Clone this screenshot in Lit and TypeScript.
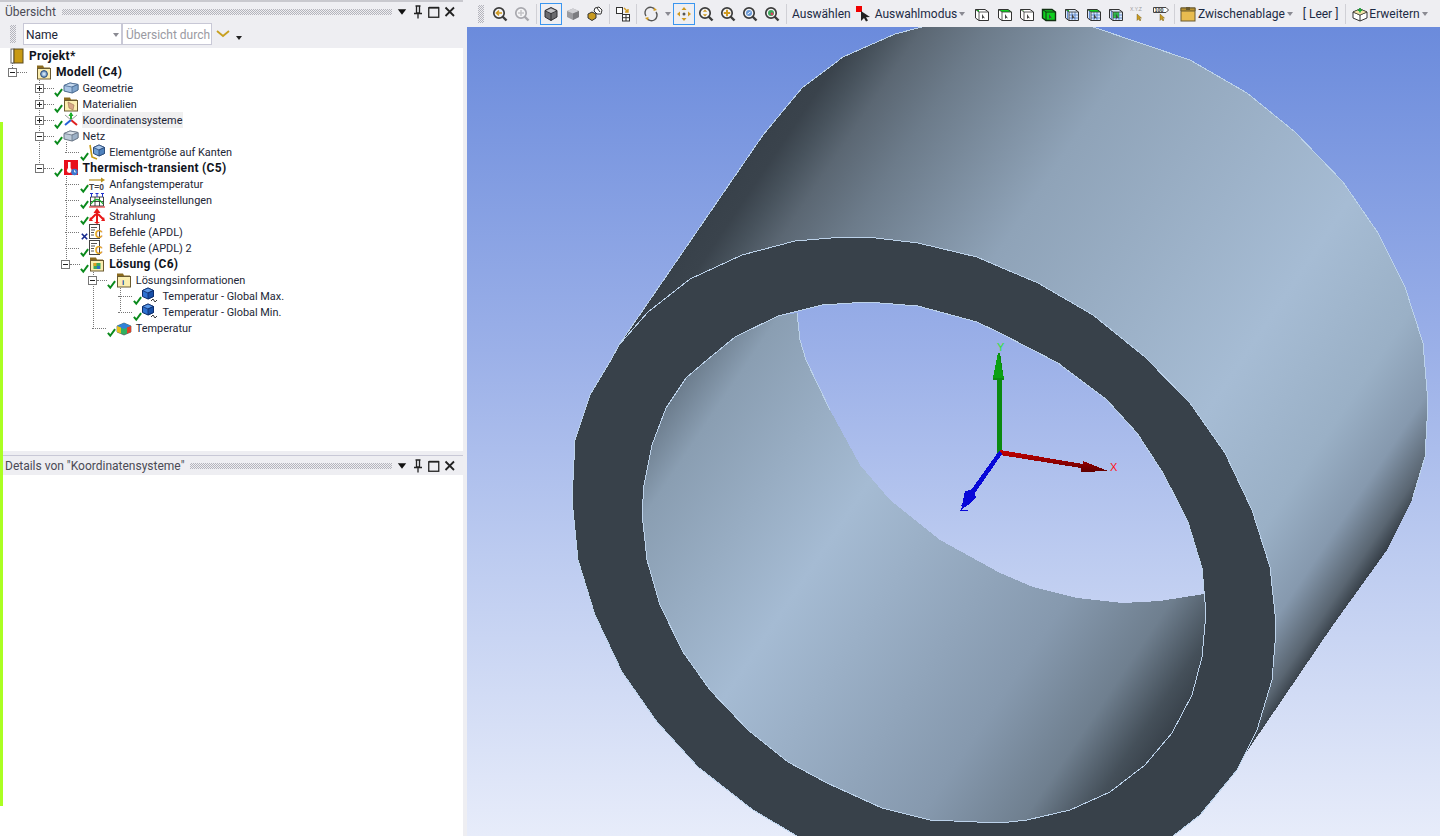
import { LitElement, html, css, svg } from "lit";
import { customElement } from "lit/decorators.js";

type Row = {
  label: string;
  depth: number;
  icon: string;
  exp?: "+" | "-";
  state?: "ok" | "x";
  bold?: boolean;
  hover?: boolean;
};

const ROWS: Row[] = [
  { label: "Modell (C4)", depth: 0, icon: "model", exp: "-", bold: true },
  { label: "Geometrie", depth: 1, icon: "geom", exp: "+", state: "ok" },
  { label: "Materialien", depth: 1, icon: "mat", exp: "+", state: "ok" },
  { label: "Koordinatensysteme", depth: 1, icon: "axes", exp: "+", state: "ok", hover: true },
  { label: "Netz", depth: 1, icon: "mesh", exp: "-", state: "ok" },
  { label: "Elementgröße auf Kanten", depth: 2, icon: "edge", state: "ok" },
  { label: "Thermisch-transient (C5)", depth: 1, icon: "therm", exp: "-", state: "ok", bold: true },
  { label: "Anfangstemperatur", depth: 2, icon: "t0", state: "ok" },
  { label: "Analyseeinstellungen", depth: 2, icon: "analysis", state: "ok" },
  { label: "Strahlung", depth: 2, icon: "rad", state: "ok" },
  { label: "Befehle (APDL)", depth: 2, icon: "cmd", state: "x" },
  { label: "Befehle (APDL) 2", depth: 2, icon: "cmd", state: "ok" },
  { label: "Lösung (C6)", depth: 2, icon: "sol", exp: "-", state: "ok", bold: true },
  { label: "Lösungsinformationen", depth: 3, icon: "info", exp: "-", state: "ok" },
  { label: "Temperatur - Global Max.", depth: 4, icon: "probe", state: "ok" },
  { label: "Temperatur - Global Min.", depth: 4, icon: "probe", state: "ok" },
  { label: "Temperatur", depth: 3, icon: "rainbow", state: "ok" },
];

const cube = (top: string, left: string, right: string, line = "#4a6a90") => svg`
  <path d="M1 5.5 L7 3 L15 4.5 L15 10 L9 13 L1 11Z" fill="${left}" stroke="${line}" stroke-width="1"/>
  <path d="M1 5.5 L7 3 L15 4.5 L9 7Z" fill="${top}" stroke="${line}" stroke-width=".8"/>
  <path d="M9 7 L15 4.5 L15 10 L9 13Z" fill="${right}" stroke="${line}" stroke-width=".8"/>`;

// upright cube, used by the probe and sizing icons
const isoCube = (top: string, left: string, right: string, line: string) => svg`
  <path d="M6 1 L11.5 3.5 V9.5 L6 12 L0.5 9.5 V3.5Z" fill="${left}" stroke="${line}"/>
  <path d="M6 1 L11.5 3.5 L6 6 L0.5 3.5Z" fill="${top}" stroke="${line}" stroke-width=".8"/>
  <path d="M6 6 L11.5 3.5 V9.5 L6 12Z" fill="${right}" stroke="${line}" stroke-width=".8"/>`;

const folder = (inner: unknown) => svg`
  <path d="M1 1.5 H7 L8 3.5 H14 V5 H1Z" fill="#8a6a1e"/>
  <rect x="1.5" y="4.5" width="13" height="10.5" fill="#fbeeb0" stroke="#6a5a30"/>
  ${inner}`;

const ICONS: Record<string, unknown> = {
  book: svg`<rect x="1" y="1" width="3" height="14" fill="#fff" stroke="#666"/><rect x="4" y="1" width="9" height="14" fill="#c89a14" stroke="#5a4a20"/>`,
  model: folder(svg`<circle cx="8" cy="10" r="3.4" fill="#7aa6cc" stroke="#2c4a78"/><rect x="6.5" y="8.5" width="3" height="3" fill="#cfe0ef"/>`),
  geom: cube("#c4d8ee", "#a8c4e4", "#7fa4cc"),
  mat: folder(svg`<path d="M5 6 L11 9 L10 14 L6 12Z" fill="#d8a888" stroke="#9a7050" stroke-width=".6"/>`),
  axes: svg`<path d="M8 8 V1" stroke="#1fae2c" stroke-width="2"/><path d="M8 0 L5.5 4 H10.5Z" fill="#1fae2c"/><path d="M8 8 L14 13" stroke="#e02020" stroke-width="2"/><path d="M8 8 L2 13" stroke="#2460d8" stroke-width="2"/><path d="M8 8 L2 3 M8 8 L14 3" stroke="#9a9a9a" stroke-width="1"/>`,
  mesh: cube("#dbe2ea", "#bccad9", "#9cb0c6", "#6a7686"),
  edge: svg`<path d="M1 1 L3 13 L8 15" fill="none" stroke="#c89a14" stroke-width="1.6"/><g transform="translate(4 0)">${isoCube("#a9c8ec", "#6f9fd4", "#4f82bc", "#2c4a78")}</g>`,
  therm: svg`<rect x="1" y="0" width="14" height="15" fill="#e8101c"/><rect x="5" y="2" width="2.6" height="8" fill="#fff"/><circle cx="6.3" cy="10.5" r="2.4" fill="#fff"/><circle cx="11.5" cy="12" r="3.3" fill="#3a78d0"/><path d="M11.5 10.2V12H13" stroke="#fff" stroke-width=".8" fill="none"/>`,
  t0: svg`<path d="M0 4 H13" stroke="#b8901c" stroke-width="1.2"/><path d="M12 1.5 L16 4 L12 6.5Z" fill="#b8901c"/><text x="0" y="14" font-family="Liberation Sans" font-size="8.5" font-weight="700" fill="#444">T=0</text>`,
  analysis: svg`<path d="M1.5 5 H14.5 M1.5 14 H14.5 M1.5 5 V14 M6 5 V14 M10.5 5 V14 M14.5 5 V14 M1.5 9.5 H14.5" stroke="#333" stroke-width=".9" fill="none"/><path d="M2 12 Q8 3 14 12" stroke="#1cb02c" stroke-width="1.3" fill="none"/><path d="M1 1.5 H4 M2.5 1.5 V5 M6.5 1.5 H9.5 M8 1.5 V5 M12 1.5 H15 M13.5 1.5 V5" stroke="#2233cc" stroke-width="1"/><path d="M0 15 H16" stroke="#e01818" stroke-width="1"/>`,
  rad: svg`<path d="M8 2 V15" stroke="#e81818" stroke-width="2"/><path d="M8 0 L4.5 5 H11.5Z" fill="#e81818"/><path d="M7 6 L2 11 M9 6 L14 11" stroke="#e81818" stroke-width="2"/><path d="M0 13 L4 13 L1 9Z M16 13 L12 13 L15 9Z M5 14 L11 14 L8 16Z" fill="#e81818"/>`,
  cmd: svg`<rect x="0.5" y="0.5" width="10" height="14" fill="#fff" stroke="#444"/><path d="M2 3.5H8M2 6H6M2 8.5H5M2 11H5" stroke="#555"/><text x="6" y="14" font-family="Liberation Sans" font-size="11" font-weight="700" fill="#e0a020">C</text>`,
  sol: folder(svg`<rect x="4.5" y="7" width="7" height="6" fill="#38a860"/><rect x="4.5" y="7" width="3" height="3" fill="#e0a020"/><rect x="8" y="10" width="3" height="3" fill="#2870c8"/>`),
  info: folder(svg`<text x="6" y="13" font-family="Liberation Sans" font-size="8" font-weight="700" fill="#1848a8">i</text>`),
  probe: svg`<g transform="translate(0 -1)">${isoCube("#5a98e8", "#2c70d0", "#1850a8", "#0c2c68")}</g><path d="M9 13 L11 11 L13 14 L15 12" stroke="#222" fill="none" stroke-width=".9"/>`,
  rainbow: svg`<path d="M1 6 L8 3 L15 6 L15 12 L8 15 L1 12Z" fill="#30b060" stroke="#444" stroke-width=".6"/><path d="M1 6 L8 3 L15 6 L8 9Z" fill="#3080d8"/><path d="M1 6 L5 7.5 L5 13.5 L1 12Z" fill="#e8c020"/><path d="M11 7.5 L15 6 L15 12 L11 13.5Z" fill="#e04028"/>`,
};

const check = svg`<svg class="state" width="9" height="9" viewBox="0 0 10 10"><path d="M1 5.5 L3.6 8.6 L9 1.2" fill="none" stroke="#0a8a1c" stroke-width="2.2"/></svg>`;
const cross = svg`<svg class="state" width="9" height="9" viewBox="0 0 10 10"><path d="M2 2 L8 8 M8 2 L2 8" stroke="#14288c" stroke-width="1.8"/></svg>`;

const mag = (inner: unknown, c = "#3c3c3c") => html`<svg width="16" height="16" viewBox="0 0 16 16"><path d="M10.5 10.5 L14.5 14.5" stroke="${c}" stroke-width="2.4"/><circle cx="7" cy="7" r="5.2" fill="#f4f4f6" stroke="${c}" stroke-width="1.7"/>${inner}</svg>`;
const ic = (inner: unknown) => html`<svg width="16" height="16" viewBox="0 0 16 16">${inner}</svg>`;

const ptr = svg`<path d="M8 8 L8 13 L9.3 11.8 L11 12.6Z" fill="#444"/>`;
const boxEdges = svg`<path d="M1.5 3.5 H11 L14.5 6 V14.5 H5 L1.5 12Z" fill="none" stroke="#333"/><path d="M5 6 V14.5 M5 6 H14.5 M5 6 L1.5 3.5" stroke="#333" stroke-width=".8" fill="none"/>`;
const selCube = (face: unknown) => ic(svg`<path d="M1.5 3.5 H11 L14.5 6 V14.5 H5 L1.5 12Z" fill="#fff"/>${face}${boxEdges}${ptr}`);
const gridCube = (face: unknown) => ic(svg`<path d="M1.5 3.5 H11 L14.5 6 V14.5 H5 L1.5 12Z" fill="#dbe8f8"/><path d="M8 6V14.5 M11 6V14.5 M5 9H14.5 M5 12H14.5 M3.5 5V13" stroke="#4a78c8" stroke-width=".8"/>${face}${boxEdges}${ptr}`);

const BODY_EDGE = "611,360 619,345 763,135 802,88 843,57 895,34 922,27 960,20 1000,15 1050,18 1093,27 1190,60 1247,93 1295,132 1343,182 1378,233 1405,287 1423,343 1428,403 1425,457 1412,500";
const OUTER_BODY = `${BODY_EDGE} 1387,550 1333,625 1233,772 900,600`;
const RING = "611,360 619,345 648,312 690,279 742,255 795,241 843,237 867,237 918,243 977,257 1000,267 1038,283 1093,315 1145,357 1190,403 1225,453 1252,510 1270,567 1276,623 1275,643 1272,680 1257,730 1237,770 1200,815 1173,836 1120,870 1000,890 900,875 797,836 753,810 698,767 657,722 622,672 595,615 578,560 572,500 575,440 590,395";
const HOLE_RIGHT = "1206,613 1202,657 1192,695 1172,733 1145,765 1110,792 1070,810 1027,820 1000,823 930,820 882,808 827,783 788,762 748,730 710,690 683,652 660,605 647,560 642,513 644,485 652,445 666,408 686,378 707,360 735,337 778,316";
const HOLE = `${HOLE_RIGHT} 822,305 867,302 918,306 977,322 1000,333 1058,363 1107,400 1137,433 1163,473 1182,510 1188,522 1202,568`;
const INNER = `${HOLE_RIGHT} 797,313 800,340 806,360 830,410 860,465 890,500 940,540 1000,573 1033,587 1077,598 1123,603 1160,601 1204,594`;

@customElement("app-root")
export class AppRoot extends LitElement {
  static styles = css`
    :host {
      display: block;
      width: 1440px;
      height: 836px;
      overflow: hidden;
      position: relative;
      background: #eeeef2;
      font-family: Roboto, "Noto Sans", sans-serif;
      font-size: 12px;
      color: #1c2636;
    }
    .page { display: flex; height: 836px; }
    .left { width: 463px; display: flex; flex-direction: column; flex: none; }
    .lime { position: absolute; left: 0; top: 122px; width: 3px; height: 684px; background: #aaff22; }
    .gap { flex: none; width: 4px; }
    .right { flex: 1; display: flex; flex-direction: column; min-width: 0; }

    .title {
      display: flex; align-items: center; flex: none; height: 20px;
      padding-left: 5px; background: #eeeef2; color: #4a4a55;
    }
    .title.top { border-top: 2px solid #c8c8ce; height: 17px; padding-top: 1px; }
    .title.sub { border-top: 1px solid #c8c8d6; height: 19px; margin-left: 2px; padding-left: 3px; margin-top: 4px; }
    .dots {
      flex: 1; height: 6px; margin: 0 2px 0 6px;
      background-image: repeating-conic-gradient(#b4b4bc 0 25%, transparent 0 50%);
      background-size: 2px 2px;
    }
    .wbtn { flex: none; width: 16px; height: 16px; display: flex; align-items: center; justify-content: center; }
    .wend { flex: none; width: 5px; }

    .filter { display: flex; align-items: center; flex: none; height: 28px; background: #eeeef2; padding-left: 10px; }
    .grip {
      width: 6px; height: 18px; flex: none;
      background-image: repeating-conic-gradient(#b4b4bc 0 25%, transparent 0 50%);
      background-size: 2px 2px;
    }
    .field {
      box-sizing: border-box; height: 22px; background: #fff; border: 1px solid #c8c8d6;
      display: flex; align-items: center; padding: 1px 0 0 2px;
    }
    .f-name { width: 99px; margin-left: 7px; justify-content: space-between; padding-right: 2px; }
    .f-search { width: 90px; color: #9a9aa2; overflow: hidden; white-space: nowrap; padding-left: 3px; }
    .caret {
      width: 0; height: 0; border-left: 3.5px solid transparent; border-right: 3.5px solid transparent;
      border-top: 4px solid #8a8a92; display: inline-block; flex: none;
    }
    .caret.big { border-top-color: #111; transform: scale(1.4); }
    .chev { margin-left: 4px; }
    .tiny { margin: 8px 0 0 6px; border-top-color: #222; }

    .tree { position: relative; flex: none; height: 403px; background: #fff; box-sizing: border-box; font-size: 10.9px; }
    .guides { position: absolute; left: 0; top: 0; }
    .row { position: relative; display: flex; align-items: center; height: 16px; white-space: nowrap; }
    .root { padding-left: 10px; }
    .exp { flex: none; width: 28px; height: 16px; display: flex; align-items: center; }
    .box {
      flex: none; box-sizing: border-box; width: 9px; height: 9px; border: 1px solid #777; background: #fff;
      display: flex; align-items: center; justify-content: center;
    }
    .stub { flex: none; width: 10px; border-top: 1px dotted #777; }
    .leaf { flex: none; width: 14px; margin-left: 4px; border-top: 1px dotted #777; }
    .ico { position: relative; flex: none; width: 20px; height: 16px; display: flex; }
    .ico svg { overflow: visible; }
    .root .ico { width: 19px; }
    .ico .state { position: absolute; left: -9px; top: 8px; }
    .lbl { padding: 1px 1px 0; line-height: 15px; margin-left: -1px; }
    .bold { padding-top: 0; line-height: 16px; font-weight: 700; font-size: 12px; letter-spacing: 0.3px; color: #10141c; }
    .hover { background: #f0f0f0; }
    .details { flex: 1; background: #fff; }

    .toolbar {
      display: flex; align-items: center; flex: none; height: 27px; background: #eeeef2;
      padding: 0 0 0 11px; box-sizing: border-box; color: #1c2a44; white-space: nowrap;
    }
    .toolbar .grip { margin-right: 5px; }
    .t { flex: none; width: 22px; height: 22px; display: flex; align-items: center; justify-content: center; box-sizing: border-box; }
    .t.on { border: 1px solid #3a96f0; }
    .t.n { width: 20px; }
    .t.ptr { width: 22px; margin-left: 2px; }
    .t.clip { width: 16px; margin-left: 2px; }
    .t.ext { width: 19px; margin-left: 1px; }
    .r { width: 22.3px; }
    .sep { flex: none; width: 1px; height: 20px; background: #d0d0d6; margin: 0 3px; }
    .sep.tight { margin-left: 2px; }
    .drop { flex: none; width: 11px; display: flex; justify-content: center; }
    .label { flex: none; display: flex; align-items: center; gap: 2px; }
    .m2 { margin-left: 2px; }
    .m6 { margin-left: 6px; }
    .m7 { margin-left: 7px; }
    .m10 { margin-left: 10px; }
    .m14 { margin-left: 14px; }
    .view { flex: 1; min-height: 0; display: block; width: 973px; height: 809px; }
    .view text { font-family: "Liberation Sans", sans-serif; }
  `;

  private titleButtons() {
    return html`
      <span class="wbtn"><span class="caret big"></span></span>
      <span class="wbtn"><svg width="12" height="14" viewBox="0 0 12 14"><path d="M3.5 1 H8.5 M4.5 1 V8 H7.5 V1 M2 8.5 H10 M6 9 V13.5" stroke="#222" stroke-width="1.3" fill="none"/></svg></span>
      <span class="wbtn"><svg width="12" height="12" viewBox="0 0 12 12"><rect x=".75" y="1.75" width="10" height="9.5" fill="none" stroke="#222" stroke-width="1.3"/><path d="M1 1.6H11" stroke="#222" stroke-width="1.6"/></svg></span>
      <span class="wbtn"><svg width="12" height="12" viewBox="0 0 12 12"><path d="M1.5 1.5 L10 10 M10 1.5 L1.5 10" stroke="#222" stroke-width="1.8"/></svg></span>
      <span class="wend"></span>`;
  }

  private row(r: Row) {
    const pad = 8 + 26.6 * r.depth;
    return html`
      <div class="row" style="padding-left:${pad}px">
        <span class="exp">
          ${r.exp
            ? html`<span class="box"><svg width="7" height="7" viewBox="0 0 7 7"><path d="${r.exp === "+" ? "M1 3.5H6M3.5 1V6" : "M1 3.5H6"}" stroke="#222"/></svg></span><span class="stub"></span>`
            : html`<span class="leaf"></span>`}
        </span>
        <span class="ico">
          <svg width="16" height="16" viewBox="0 0 16 16">${ICONS[r.icon]}</svg>
          ${r.state === "ok" ? check : r.state === "x" ? cross : ""}
        </span>
        <span class="lbl ${r.bold ? "bold" : ""} ${r.hover ? "hover" : ""}">${r.label}</span>
      </div>`;
  }

  private toolbar() {
    return html`
      <div class="toolbar">
        <span class="grip"></span>
        <span class="t">${mag(svg`<path d="M10 7H5 M7 4.6 L4.4 7 L7 9.4" stroke="#d09a20" stroke-width="1.5" fill="none"/>`)}</span>
        <span class="t">${mag(svg`<path d="M4 7H10 M7 4 V10" stroke="#c4c4c8" stroke-width="1.5"/>`, "#a8a8ae")}</span>
        <span class="sep"></span>
        <span class="t on">${ic(svg`<path d="M8 1.5 L14 4.5 V11 L8 14.5 L2 11 V4.5Z" fill="#6a6a6e" stroke="#2e2e32"/><path d="M2 4.5 L8 7.5 L14 4.5 M8 7.5V14.5" stroke="#2e2e32" fill="none"/><path d="M8 2.5 L13 4.7 L8 7 L3 4.7Z" fill="#c4c4c8"/>`)}</span>
        <span class="t">${ic(svg`<path d="M8 2.5 L14 5 V11 L8 14 L2 11 V5Z" fill="#9c9ca0"/><path d="M8 2.5 L14 5 L8 7.5 L2 5Z" fill="#d0d0d4"/><path d="M8 7.5 L14 5 V11 L8 14Z" fill="#7c7c80"/>`)}</span>
        <span class="t">${ic(svg`<path d="M1 8 L5 6 L9 8 V12 L5 14.5 L1 12Z" fill="#c89a20" stroke="#333"/><path d="M8 2 L12 1 L15 4 L14 8 L10 8 L7 5Z" fill="#fff" stroke="#333"/><path d="M10 2 L13 6" stroke="#333"/>`)}</span>
        <span class="sep"></span>
        <span class="t n">${ic(svg`<rect x="1.5" y="1.5" width="6" height="6" fill="#fff" stroke="#333"/><rect x="7.5" y="8.5" width="7" height="6.5" fill="#fff" stroke="#333"/><path d="M11 8.5V15 M7.5 11.7H14.5" stroke="#333"/><path d="M9 2 L13 6 M13 3 V6 H10" stroke="#d09a20" stroke-width="1.4" fill="none"/>`)}</span>
        <span class="sep"></span>
        <span class="t">${ic(svg`<path d="M3 10 A5.5 5.5 0 0 1 12 3.6" stroke="#555" stroke-width="1.4" fill="none"/><path d="M13 6 A5.5 5.5 0 0 1 4 12.4" stroke="#555" stroke-width="1.4" fill="none"/><path d="M11 1.5 L14 4 L10.5 5Z M5 14.5 L2 12 L5.5 11Z" fill="#d09a20"/>`)}</span>
        <span class="drop"><span class="caret"></span></span>
        <span class="t on">${ic(svg`<path d="M8 1 L10.5 4 H5.5Z M8 15 L10.5 12 H5.5Z" fill="#d09a20"/><path d="M1 8 L4 5.5 V10.5Z M15 8 L12 5.5 V10.5Z" fill="#d09a20"/><circle cx="8" cy="8" r="1.5" fill="#555"/>`)}</span>
        <span class="t">${mag(svg`<path d="M7 3.5 L9.2 5.8 H4.8Z M7 10.5 L9.2 8.2 H4.8Z" fill="#d09a20"/>`)}</span>
        <span class="t">${mag(svg`<path d="M3.8 7H10.2 M7 3.8V10.2" stroke="#d09a20" stroke-width="2"/>`)}</span>
        <span class="t">${mag(svg`<circle cx="7" cy="7" r="3" fill="#6a9ad8"/><path d="M5.5 8 L8.5 6" stroke="#fff"/>`)}</span>
        <span class="t">${mag(svg`<circle cx="7" cy="7" r="3" fill="#3ca85c"/><circle cx="8" cy="8" r="1.4" fill="#d84060"/>`)}</span>
        <span class="sep"></span>
        <span class="label m2">Auswählen</span>
        <span class="t ptr">${ic(svg`<rect x="0" y="0" width="6" height="6" fill="#f00000"/><path d="M5 5 L5 15 L8 12 L10 15.5 L12 14.5 L10 11.2 L14 11Z" fill="#222"/>`)}</span>
        <span class="label">Auswahlmodus<span class="caret"></span></span>
        <span class="t r m6">${selCube(svg`<path d="M1.5 3.5 H5 V6 H4.5Z" fill="#10d020"/>`)}</span>
        <span class="t r">${selCube(svg`<path d="M1.5 3.5 H11 L14.5 6 H5Z" fill="#10d020"/>`)}</span>
        <span class="t r">${selCube(svg`<path d="M1.5 3.5 H5 L5 6Z" fill="#a8e8a8"/>`)}</span>
        <span class="t r">${ic(svg`<path d="M1.5 3.5 H11 L14.5 6 V14.5 H5 L1.5 12Z" fill="#10d020" stroke="#123012" stroke-width="1.4"/><path d="M5 6 V14.5 M5 6 H14.5 M5 6 L1.5 3.5" stroke="#123012"/>${ptr}`)}</span>
        <span class="t r">${gridCube(svg`<path d="M1.5 3.5 H5 V6Z" fill="#10d020"/>`)}</span>
        <span class="t r">${gridCube(svg`<path d="M1.5 3.5 H11 L14.5 6 H5Z" fill="#10d020"/>`)}</span>
        <span class="t r">${gridCube(svg`<rect x="5" y="6" width="6" height="6" fill="#10b020" opacity=".8"/>`)}</span>
        <span class="t r">${ic(svg`<text x="0" y="5" font-size="5" fill="#9a9a9a" font-family="Liberation Sans">X.Y.Z</text><path d="M7 8 L7 14.5 L8.5 13 L10 15 L11 14 L9.6 12.2 L11.5 12Z" fill="#c89a20" stroke="#6a5010" stroke-width=".4"/>`)}</span>
        <span class="t r">${ic(svg`<path d="M0.5 1.5 H13 L15.5 4 L13 6.5 H0.5Z" fill="#fff" stroke="#444"/><text x="1.5" y="5.6" font-size="5.4" font-weight="700" fill="#333" font-family="Liberation Sans">100</text><path d="M7 8 L7 14.5 L8.5 13 L10 15 L11 14 L9.6 12.2 L11.5 12Z" fill="#c89a20" stroke="#6a5010" stroke-width=".4"/>`)}</span>
        <span class="sep tight"></span>
        <span class="t clip">${ic(svg`<rect x="1" y="2" width="14" height="13" fill="#e8bc50" stroke="#6a5a30"/><path d="M1 2 H15 V5 H1Z" fill="#b8912c" stroke="#6a5a30"/><rect x="6" y="1" width="4" height="3" fill="#6a5a30"/>`)}</span>
        <span class="label m2">Zwischenablage<span class="caret"></span></span>
        <span class="label m10">[ Leer ]</span>
        <span class="sep m7"></span>
        <span class="t ext">${ic(svg`<path d="M8 3 L15 6 V12 L8 15 L1 12 V6Z" fill="#fff" stroke="#333"/><path d="M1 6 L8 9 L15 6 M8 9V15" stroke="#333" fill="none"/><path d="M1 6 L8 3 L15 6 L8 9Z" fill="#f4e4a8" stroke="#333" stroke-width=".6"/><path d="M8 2V6.5 M5.8 4.2H10.2" stroke="#18a838" stroke-width="1.6"/>`)}</span>
        <span class="label">Erweitern<span class="caret"></span></span>
        <span class="sep m14"></span>
      </div>`;
  }

  private viewport() {
    return html`
      <svg class="view" viewBox="467 27 973 809" shape-rendering="crispEdges">
        <defs>
          <linearGradient id="bg" gradientUnits="userSpaceOnUse" x1="0" y1="27" x2="0" y2="836">
            <stop offset="0" stop-color="#6b8bdc"/>
            <stop offset=".4" stop-color="#9bb0e8"/>
            <stop offset=".65" stop-color="#bccbf0"/>
            <stop offset="1" stop-color="#e7ecfa"/>
          </linearGradient>
          <linearGradient id="outer" gradientUnits="userSpaceOnUse" x1="619" y1="345" x2="1241" y2="764">
            <stop offset="0" stop-color="#38414a"/>
            <stop offset=".03" stop-color="#3a434c"/>
            <stop offset=".06" stop-color="#47525c"/>
            <stop offset=".1" stop-color="#5b6773"/>
            <stop offset=".17" stop-color="#6c7b8a"/>
            <stop offset=".35" stop-color="#8fa3b8"/>
            <stop offset=".7" stop-color="#a6bcd4"/>
            <stop offset=".85" stop-color="#9ab0c6"/>
            <stop offset=".93" stop-color="#8699ae"/>
            <stop offset=".98" stop-color="#5a6672"/>
            <stop offset="1" stop-color="#38414a"/>
          </linearGradient>
          <linearGradient id="inner" gradientUnits="userSpaceOnUse" x1="657" y1="386" x2="1172" y2="733">
            <stop offset="0" stop-color="#5e6d7c"/>
            <stop offset=".1" stop-color="#8a9eb2"/>
            <stop offset=".37" stop-color="#a5bbd3"/>
            <stop offset=".74" stop-color="#8699ae"/>
            <stop offset=".88" stop-color="#6f7f8f"/>
            <stop offset=".96" stop-color="#45505a"/>
            <stop offset="1" stop-color="#38414a"/>
          </linearGradient>
          <linearGradient id="xhead" x1="0" y1="0" x2="0" y2="1">
            <stop offset="0" stop-color="#c80000"/><stop offset="1" stop-color="#600000"/>
          </linearGradient>
        </defs>
        <rect x="467" y="27" width="973" height="809" fill="url(#bg)"/>
        <polygon points="${OUTER_BODY}" fill="url(#outer)"/>
        <polyline points="${BODY_EDGE}" fill="none" stroke="#bcd2ea" stroke-width="1"/>
        <polygon points="${RING}" fill="#38414a" stroke="#bcd2ea" stroke-width="1"/>
        <polygon points="${HOLE}" fill="url(#bg)"/>
        <polygon points="${INNER}" fill="url(#inner)"/>
        <polygon points="${HOLE}" fill="none" stroke="#bcd2ea" stroke-width="1"/>
        <polyline points="797,313 800,340 806,360 830,410" fill="none" stroke="#bcd2ea" stroke-width="1"/>

        <path d="M997 453 V380 H993 L998 353 L1000 353 L1004 380 H1002 V453Z" fill="#0b8a10"/>
        <path d="M998 353 L993 378 L1004 378Z" fill="#0ba012"/>
        <path d="M1000 450 L1083 464 L1083 461 L1108 471 L1081 472 L1081 468 L1000 455Z" fill="url(#xhead)"/>
        <path d="M999 451 L1002 454 L975 493 L976 498 L968 505 L961 510 L965 491 L971 490Z" fill="#0808d8"/>
        <path d="M960 510 H968 M961 505 H967" stroke="#0808d8" stroke-width="1"/>
        <text x="997" y="351" font-size="11" fill="#30e030">Y</text>
        <text x="1110" y="471" font-size="11" fill="#ff1010">X</text>
      </svg>`;
  }

  render() {
    return html`
      <div class="page">
        <div class="left">
          <div class="title top">Übersicht<span class="dots"></span>${this.titleButtons()}</div>
          <div class="filter">
            <span class="grip"></span>
            <div class="field f-name">Name<span class="caret"></span></div>
            <div class="field f-search">Übersicht durch</div>
            <svg class="chev" width="14" height="10" viewBox="0 0 14 10"><path d="M1 2 L7 7 L13 2" fill="none" stroke="#c8a020" stroke-width="1.8"/></svg>
            <span class="caret tiny"></span>
          </div>
          <div class="tree">
            <svg class="guides" width="140" height="300" fill="none" stroke="#777" stroke-dasharray="1 1">
              <path d="M12.5 15V20 M39.5 32V120 M66.5 94V104 M66.5 128V216 M93.5 224V280 M120.5 240V264"/>
            </svg>
            <div class="row root">
              <span class="ico"><svg width="16" height="16" viewBox="0 0 16 16">${ICONS.book}</svg></span>
              <span class="lbl bold">Projekt*</span>
            </div>
            ${ROWS.map((r) => this.row(r))}
          </div>
          <div class="title sub">Details von "Koordinatensysteme"<span class="dots"></span>${this.titleButtons()}</div>
          <div class="details"></div>
        </div>
        <div class="gap"></div>
        <div class="right">
          ${this.toolbar()}
          ${this.viewport()}
        </div>
      </div>
      <div class="lime"></div>
    `;
  }
}
